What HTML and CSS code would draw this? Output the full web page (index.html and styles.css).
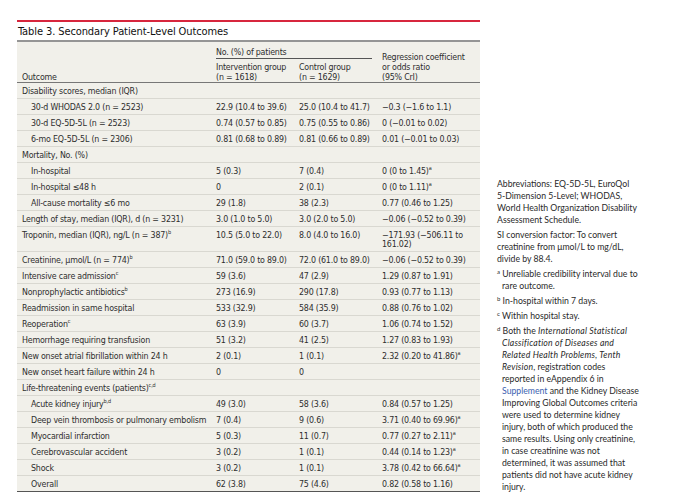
FILE: index.html
```html
<!DOCTYPE html>
<html lang="en">
<head>
<meta charset="utf-8">
<title>Table 3. Secondary Patient-Level Outcomes</title>
<link rel="stylesheet" href="styles.css">
</head>
<body>
<div class="page">
  <section class="table-wrap">
    <h1 class="caption">Table 3. Secondary Patient-Level Outcomes</h1>
    <table class="outcomes">
      <colgroup>
        <col class="c-outcome"><col class="c-int"><col class="c-ctl"><col class="c-reg">
      </colgroup>
      <thead>
        <tr>
          <th rowspan="2" class="h-outcome">Outcome</th>
          <th colspan="2" class="h-group"><div class="h-group-label">No. (%) of patients</div></th>
          <th rowspan="2" class="h-reg">Regression coefficient<br>or odds ratio<br>(95% CrI)</th>
        </tr>
        <tr class="h-sub">
          <th>Intervention group<br>(n = 1618)</th>
          <th>Control group<br>(n = 1629)</th>
        </tr>
      </thead>
      <tbody>
        <tr><td>Disability scores, median (IQR)</td><td></td><td></td><td></td></tr>
        <tr><td class="ind">30-d WHODAS 2.0 (n = 2523)</td><td>22.9 (10.4 to 39.6)</td><td>25.0 (10.4 to 41.7)</td><td>−0.3 (−1.6 to 1.1)</td></tr>
        <tr><td class="ind">30-d EQ-5D-5L (n = 2523)</td><td>0.74 (0.57 to 0.85)</td><td>0.75 (0.55 to 0.86)</td><td>0 (−0.01 to 0.02)</td></tr>
        <tr><td class="ind">6-mo EQ-5D-5L (n = 2306)</td><td>0.81 (0.68 to 0.89)</td><td>0.81 (0.66 to 0.89)</td><td>0.01 (−0.01 to 0.03)</td></tr>
        <tr><td>Mortality, No. (%)</td><td></td><td></td><td></td></tr>
        <tr><td class="ind">In-hospital</td><td>5 (0.3)</td><td>7 (0.4)</td><td>0 (0 to 1.45)<sup>a</sup></td></tr>
        <tr><td class="ind">In-hospital ≤48 h</td><td>0</td><td>2 (0.1)</td><td>0 (0 to 1.11)<sup>a</sup></td></tr>
        <tr><td class="ind">All-cause mortality ≤6 mo</td><td>29 (1.8)</td><td>38 (2.3)</td><td>0.77 (0.46 to 1.25)</td></tr>
        <tr><td>Length of stay, median (IQR), d (n = 3231)</td><td>3.0 (1.0 to 5.0)</td><td>3.0 (2.0 to 5.0)</td><td>−0.06 (−0.52 to 0.39)</td></tr>
        <tr><td>Troponin, median (IQR), ng/L (n = 387)<sup>b</sup></td><td>10.5 (5.0 to 22.0)</td><td>8.0 (4.0 to 16.0)</td><td>−171.93 (−506.11 to 161.02)</td></tr>
        <tr><td>Creatinine, μmol/L (n = 774)<sup>b</sup></td><td>71.0 (59.0 to 89.0)</td><td>72.0 (61.0 to 89.0)</td><td>−0.06 (−0.52 to 0.39)</td></tr>
        <tr><td>Intensive care admission<sup>c</sup></td><td>59 (3.6)</td><td>47 (2.9)</td><td>1.29 (0.87 to 1.91)</td></tr>
        <tr><td>Nonprophylactic antibiotics<sup>b</sup></td><td>273 (16.9)</td><td>290 (17.8)</td><td>0.93 (0.77 to 1.13)</td></tr>
        <tr><td>Readmission in same hospital</td><td>533 (32.9)</td><td>584 (35.9)</td><td>0.88 (0.76 to 1.02)</td></tr>
        <tr><td>Reoperation<sup>c</sup></td><td>63 (3.9)</td><td>60 (3.7)</td><td>1.06 (0.74 to 1.52)</td></tr>
        <tr><td>Hemorrhage requiring transfusion</td><td>51 (3.2)</td><td>41 (2.5)</td><td>1.27 (0.83 to 1.93)</td></tr>
        <tr><td>New onset atrial fibrillation within 24 h</td><td>2 (0.1)</td><td>1 (0.1)</td><td>2.32 (0.20 to 41.86)<sup>a</sup></td></tr>
        <tr><td>New onset heart failure within 24 h</td><td>0</td><td>0</td><td></td></tr>
        <tr><td>Life-threatening events (patients)<sup>c,d</sup></td><td></td><td></td><td></td></tr>
        <tr><td class="ind">Acute kidney injury<sup>b,d</sup></td><td>49 (3.0)</td><td>58 (3.6)</td><td>0.84 (0.57 to 1.25)</td></tr>
        <tr><td class="ind">Deep vein thrombosis or pulmonary embolism</td><td>7 (0.4)</td><td>9 (0.6)</td><td>3.71 (0.40 to 69.96)<sup>a</sup></td></tr>
        <tr><td class="ind">Myocardial infarction</td><td>5 (0.3)</td><td>11 (0.7)</td><td>0.77 (0.27 to 2.11)<sup>a</sup></td></tr>
        <tr><td class="ind">Cerebrovascular accident</td><td>3 (0.2)</td><td>1 (0.1)</td><td>0.44 (0.14 to 1.23)<sup>a</sup></td></tr>
        <tr><td class="ind">Shock</td><td>3 (0.2)</td><td>1 (0.1)</td><td>3.78 (0.42 to 66.64)<sup>a</sup></td></tr>
        <tr><td class="ind">Overall</td><td>62 (3.8)</td><td>75 (4.6)</td><td>0.82 (0.58 to 1.16)</td></tr>
      </tbody>
    </table>
  </section>
  <aside class="notes">
    <p>Abbreviations: EQ-5D-5L, EuroQol <span class="nw">5-Dimension</span> 5-Level; WHODAS, World Health Organization Disability Assessment Schedule.</p>
    <p>SI conversion factor: To convert creatinine from μmol/L to mg/dL, divide by 88.4.</p>
    <p class="fn"><sup>a</sup> Unreliable credibility interval due to rare outcome.</p>
    <p class="fn"><sup>b</sup> In-hospital within 7 days.</p>
    <p class="fn"><sup>c</sup> Within hospital stay.</p>
    <p class="fn"><sup>d</sup> Both the <i>International Statistical Classification of Diseases and Related Health Problems, Tenth Revision</i>, registration codes reported in eAppendix 6 in <a href="#">Supplement</a> and the Kidney Disease Improving Global Outcomes criteria were used to determine kidney injury, both of which produced the same results. Using only creatinine, in case creatinine was not determined, it was assumed that patients did not have acute kidney injury.</p>
  </aside>
</div>
</body>
</html>
```
FILE: styles.css
```css
html, body {
  margin: 0;
  padding: 0;
  background: #ffffff;
}

.page {
  display: flex;
  align-items: flex-end;
  padding: 20px 0 0 17px;
  color: #2b2b2b;
}

.table-wrap {
  width: 463px;
  flex: none;
  border-top: 2px solid #d7263d;
}

.caption {
  margin: 0;
  padding: 4px 0 2px 1px;
  font-family: "DejaVu Sans Condensed", "DejaVu Sans", sans-serif;
  font-size: 11px;
  line-height: 12px;
  letter-spacing: -0.1px;
  font-weight: normal;
  color: #111111;
}

.outcomes {
  width: 463px;
  table-layout: fixed;
  border-collapse: collapse;
  background: #f1f0ea;
  border-top: 2px solid #959595;
  border-bottom: 1.5px solid #555555;
  font-family: "DejaVu Sans Condensed", "DejaVu Sans", sans-serif;
  font-size: 8.8px;
  letter-spacing: -0.2px;
  line-height: 9px;
  color: #2e2e2e;
}

.c-outcome { width: 194px; }
.c-int { width: 83px; }
.c-ctl { width: 83px; }
.c-reg { width: 103px; }

.outcomes th {
  font-weight: normal;
  text-align: left;
  vertical-align: bottom;
  white-space: nowrap;
  line-height: 10px;
  padding: 0 5px 0 5px;
}

.outcomes .h-group {
  padding: 5px 5px 0 5px;
  vertical-align: top;
}

.h-group-label {
  padding-bottom: 1px;
  border-bottom: 1px solid #555555;
}

.h-sub th {
  padding-top: 3px;
}

thead {
  border-bottom: 1.5px solid #777777;
}

.outcomes td {
  padding: 4px 5px 2px 5px;
  vertical-align: top;
  border-bottom: 1px solid #d9d8d1;
  white-space: nowrap;
}

.outcomes td:last-child {
  white-space: normal;
}

.outcomes td.ind {
  padding-left: 14px;
}

.outcomes tbody tr:last-child td {
  border-bottom: none;
}

sup {
  font-size: 5.5px;
  line-height: 0;
  vertical-align: 4px;
}

.notes {
  width: 142px;
  flex: none;
  margin-left: 17px;
  margin-bottom: -1px;
  font-family: "Lato", "Open Sans", sans-serif;
  font-size: 8.7px;
  line-height: 12px;
  color: #2a2a2a;
}

.notes p {
  margin: 0 0 3px 0;
}

.notes p:last-child {
  margin-bottom: 0;
}

.notes .nw {
  white-space: nowrap;
}

.notes i {
  letter-spacing: 0.2px;
}

.notes .fn {
  padding-left: 5px;
  text-indent: -5px;
}

.notes sup {
  font-size: 6px;
  vertical-align: 3px;
}

.notes a {
  color: #3b62b0;
  text-decoration: none;
}
```
